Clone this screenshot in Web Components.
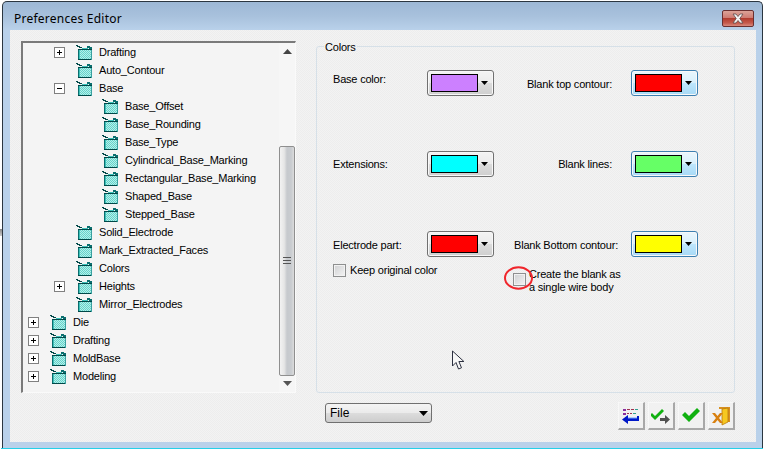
<!DOCTYPE html>
<html><head><meta charset="utf-8"><style>
html,body{margin:0;padding:0;background:#fff;overflow:hidden}
body{width:763px;height:449px;font:12px "Liberation Sans",sans-serif;color:#000}
</style></head><body>
<pref-window heading="Preferences Editor">
  <tree-panel slot="tree">
    <tree-row level="1" exp="+">Drafting</tree-row>
    <tree-row level="1">Auto_Contour</tree-row>
    <tree-row level="1" exp="-">Base</tree-row>
    <tree-row level="2">Base_Offset</tree-row>
    <tree-row level="2">Base_Rounding</tree-row>
    <tree-row level="2">Base_Type</tree-row>
    <tree-row level="2">Cylindrical_Base_Marking</tree-row>
    <tree-row level="2">Rectangular_Base_Marking</tree-row>
    <tree-row level="2">Shaped_Base</tree-row>
    <tree-row level="2">Stepped_Base</tree-row>
    <tree-row level="1">Solid_Electrode</tree-row>
    <tree-row level="1">Mark_Extracted_Faces</tree-row>
    <tree-row level="1">Colors</tree-row>
    <tree-row level="1" exp="+">Heights</tree-row>
    <tree-row level="1">Mirror_Electrodes</tree-row>
    <tree-row level="0" exp="+">Die</tree-row>
    <tree-row level="0" exp="+">Drafting</tree-row>
    <tree-row level="0" exp="+">MoldBase</tree-row>
    <tree-row level="0" exp="+">Modeling</tree-row>
  </tree-panel>
  <colors-group slot="group" label="Colors"></colors-group>
  <combo-box slot="combo">File</combo-box>
  <tool-button slot="tools" kind="list"></tool-button>
  <tool-button slot="tools" kind="apply"></tool-button>
  <tool-button slot="tools" kind="ok"></tool-button>
  <tool-button slot="tools" kind="exit"></tool-button>
</pref-window>
<script>
function def(name, css, html, init){
  customElements.define(name, class extends HTMLElement{
    connectedCallback(){
      if(this.shadowRoot) return;
      const r=this.attachShadow({mode:'open'});
      r.innerHTML='<style>'+css+'</style>'+(typeof html==='function'?html(this):html);
      if(init) init(this,r);
    }
  });
}
const dither='background-color:#f0f0f0;background-image:conic-gradient(#f3f3f3 25%,#ededed 0 50%,#f3f3f3 0 75%,#ededed 0);background-size:2px 2px;';
const uiFont='font:11px "Liberation Sans",sans-serif;letter-spacing:-.2px;';

def('pref-window',`
:host{display:block;position:relative;width:763px;height:449px;box-sizing:border-box;padding:1px 0 0 2px}
.frame{box-sizing:border-box;height:447px;border:1px solid #2b3640;border-width:1px 1px 0 1px;border-radius:5px 5px 0 0;
  background:linear-gradient(#9db8d5 0,#a8c1dc 14px,#b9d1ea 28px,#b9d1ea 100%);display:flex;flex-direction:column}
.bar{height:28px;box-sizing:border-box;flex:none;display:flex;align-items:flex-start;justify-content:space-between;padding:0 8px 0 11px}
.title{font:12px "Noto Sans",sans-serif;color:#000;margin-top:8px;letter-spacing:.02em}
.close{width:32px;height:17px;box-sizing:border-box;border:1px solid #6a3030;border-radius:2px;margin-top:8px;
  background:linear-gradient(#dca398 0,#cf7c72 45%,#b13d2f 50%,#c65a4c 80%,#d88a7e 100%);display:flex;align-items:center;justify-content:center}
.client{margin:0 6px 0 7px;height:412px;box-sizing:border-box;${dither}
  display:grid;grid-template-columns:275px 419px;column-gap:20px;grid-template-rows:352px 28px;row-gap:9px;padding:11px 0 0 11px;position:relative}
.tree{grid-row:1/3;height:352px}
.foot{display:flex;justify-content:space-between;padding-left:9px;grid-column:2;align-items:flex-start}
.foot>div{display:flex;gap:3px}
.pad{height:5px;flex:none}
.edge{height:1px;background:#25d0e8;flex:none;margin:0 -1px}
.ring{position:absolute;left:493px;top:236px;pointer-events:none}
.cursor{position:absolute;left:441px;top:320px;pointer-events:none}
.sliver{position:absolute;left:0;top:229px;width:2px;height:7px;background:linear-gradient(#888,#ccc)}
`,h=>`<div class="sliver"></div><div class="frame">
  <div class="bar"><span class="title">${h.getAttribute('heading')}</span>
    <span class="close"><svg width="18" height="11" viewBox="0 0 18 11"><path d="M4 1h3l2 2.500L11 1h3l-3.200 4.500L14 10h-3L9 7.500 7 10H4l3.200-4.500z" fill="#f4f4f4" stroke="#5d4a4a" stroke-width=".8"/></svg></span></div>
  <div class="client">
    <div class="tree"><slot name="tree"></slot></div>
    <div style="grid-column:2;grid-row:1"><slot name="group"></slot></div>
    <div class="foot"><slot name="combo"></slot><div><slot name="tools"></slot></div></div>
    <svg class="ring" width="31" height="25" viewBox="0 0 31 25"><ellipse cx="15.500" cy="12" rx="13.500" ry="10.700" fill="none" stroke="#f0262c" stroke-width="2"/></svg>
    <svg class="cursor" width="14" height="22" viewBox="0 0 14 22"><path d="M1.500 1v15l3.500-3.500 2.500 6.500 3-1.200-2.600-6.300h5z" fill="#f7f7f7" stroke="#2c3040" stroke-width="1"/></svg>
  </div>
  <div class="pad"></div>
</div><div class="edge"></div>`);

def('tree-panel',`
:host{display:flex;box-sizing:border-box;width:275px;height:352px;border-style:solid;border-width:2px 1px 1px 2px;border-color:#7a7a7a #fafafa #fafafa #7a7a7a;background:#f4f4f4}
.rows{flex:1;min-width:0}
`,`<div class="rows"><slot></slot></div><v-scrollbar></v-scrollbar>`);

def('tree-row',`
:host{display:flex;align-items:center;height:18px;${uiFont}white-space:nowrap}
.exp{width:11px;height:11px;flex:none;margin-right:11px;box-sizing:border-box;border:1px solid #808080;background:#fff;display:flex;align-items:center;justify-content:center}
.blank{visibility:hidden}
svg.box{margin-right:7px;flex:none}
`,h=>{
  const e=h.getAttribute('exp');
  h.style.paddingLeft=(5+26*(+h.getAttribute('level')))+'px';
  const mark=e==='+'?'<path d="M2 4.500h5M4.500 2v5" stroke="#000"/>':e==='-'?'<path d="M2 4.500h5" stroke="#000"/>':'';
  return `<span class="exp ${e?'':'blank'}"><svg width="9" height="9" viewBox="0 0 9 9">${mark}</svg></span>
  <svg class="box" width="16" height="16" viewBox="0 0 16 16" shape-rendering="crispEdges">
    <defs><pattern id="d" width="2" height="2" patternUnits="userSpaceOnUse"><rect width="2" height="2" fill="#b4f0ea"/><rect width="1" height="1" fill="#66d2ca"/><rect x="1" y="1" width="1" height="1" fill="#66d2ca"/></pattern></defs>
    <path d="M4 6h11v9H4z" fill="url(#d)"/>
    <path d="M2 5h2v10H2z" fill="#0a6e6e"/><path d="M3 6h1v9H3z" fill="#3cc0b8"/>
    <path d="M2 15h13v1H2z" fill="#004848"/><path d="M15 5h1v11h-1z" fill="#3aa0a0"/>
    <path d="M2 5h14v1H2z" fill="#004848"/>
    <path d="M0 1h2v1h2v1h2v1h-3V3H1V2H0z" fill="#004848"/>
    <path d="M6 4h6v1H6z" fill="#3cc0b8"/>
    <path d="M11 2h3v1h2v2h-3V4h-2z" fill="#0a6e6e"/>
  </svg><slot></slot>`;
});

def('v-scrollbar',`
:host{display:flex;flex-direction:column;width:16px;flex:none;background:#f6f6f6;margin-right:0}
.b{height:17px;flex:none;display:flex;align-items:center;justify-content:center}
.t{flex:1;min-height:0;padding-top:86px;box-sizing:border-box}
.th{height:230px;box-sizing:border-box;border:1px solid #8f8f8f;border-radius:2px;background:linear-gradient(90deg,#f2f2f2 0,#e6e6e6 30%,#c6c9cd 50%,#c9ccd0 80%,#dcdcdc 100%);display:flex;align-items:center;justify-content:center}
`,`<div class="b"><svg width="9" height="5" viewBox="0 0 9 5"><path d="M4.500 0L9 5H0z" fill="#444"/></svg></div>
<div class="t"><div class="th"><svg width="8" height="8" viewBox="0 0 8 8"><path d="M0 .5h8M0 3.500h8M0 6.500h8" stroke="#555"/></svg></div></div>
<div class="b"><svg width="9" height="5" viewBox="0 0 9 5"><path d="M0 0h9L4.500 5z" fill="#555"/></svg></div>`);

def('colors-group',`
:host{display:block;box-sizing:border-box;height:347px;margin-top:5px;border:1px solid #d6e0e8;border-radius:3px;${uiFont}}
.cap{display:block;width:fit-content;margin:-6px 0 0 7px;padding:0 1px;${dither}line-height:13px}
.g{display:grid;grid-template-columns:94px 67px 20px 104px 13px 67px;grid-template-rows:81px 80px 26px auto;padding:16px 0 0 16px;align-items:start}
.l{height:26px;line-height:26px;white-space:nowrap}
.r{text-align:right;grid-column:4}
.bt{grid-column:6}
.bl{grid-column:2}
.a{grid-column:1/3;margin-top:7px}
.c{grid-column:3/7;margin-top:16px;margin-left:19px}
`,h=>`<span class="cap">${h.getAttribute('label')}</span>
<div class="g">
 <span class="l" style="margin-top:-4px">Base color:</span><color-button class="bl" color="#cc80ff"></color-button>
 <span class="l r" style="padding-right:6px;margin-top:1px">Blank top contour:</span><color-button class="bt" hot color="#ff0000"></color-button>
 <span class="l">Extensions:</span><color-button class="bl" color="#00ffff"></color-button>
 <span class="l r" style="padding-right:6px">Blank lines:</span><color-button class="bt" hot color="#66ff66"></color-button>
 <span class="l" style="margin-top:1px">Electrode part:</span><color-button class="bl" color="#ff0000"></color-button>
 <span class="l r" style="margin-top:1px">Blank Bottom contour:</span><color-button class="bt" hot color="#ffff00"></color-button>
 <check-box class="a">Keep original color</check-box>
 <check-box class="c" multi>Create the blank as<br>a single wire body</check-box>
</div>`);

def('color-button',`
:host{display:flex;box-sizing:border-box;width:67px;height:26px;border:1px solid #707070;border-radius:3px;padding:3px 3px 3px 3px;
  background:linear-gradient(#f4f4f4 0,#ececec 48%,#dcdcdc 52%,#cfcfcf 100%);box-shadow:inset 0 0 0 1px #f8f8f8}
:host([hot]){border-color:#3c7fb1;background:linear-gradient(#eaf6fd 0,#d9f0fc 48%,#bee6fd 52%,#a7d9f5 100%)}
.s{width:47px;height:18px;box-sizing:border-box;border:1px solid #000;flex:none}
.a{flex:1;display:flex;align-items:center;justify-content:center;padding-bottom:1px}
`,h=>`<span class="s" style="background:${h.getAttribute('color')}"></span><span class="a"><svg width="7" height="4" viewBox="0 0 7 4"><path d="M0 0h7L3.500 4z" fill="#000"/></svg></span>`);

def('check-box',`
:host{display:flex;align-items:flex-start;gap:4px;white-space:nowrap;line-height:13px}
.b{width:13px;height:13px;box-sizing:border-box;border:1px solid #8e8f8f;background:linear-gradient(135deg,#cfd0d2,#f4f4f4);box-shadow:inset 0 0 0 1px #f2f2f2;flex:none}
:host([multi]){gap:3px}
:host([multi]) .t{margin-top:-5px}
`,`<span class="b"></span><span class="t"><slot></slot></span>`);

def('combo-box',`
:host{display:flex;align-items:center;justify-content:space-between;box-sizing:border-box;width:107px;height:20px;margin-top:1px;padding:0 3px 0 4px;border:1px solid #707070;border-radius:3px;
 background:linear-gradient(#f4f4f4,#ebebeb 48%,#dcdcdc 52%,#cdcdcd);font:12px "Liberation Sans",sans-serif}
`,`<slot></slot><svg width="9" height="5" viewBox="0 0 9 5"><path d="M0 0h9L4.500 5z" fill="#000"/></svg>`);

const icons={
 list:`<path d="M2 3h3v2H2zM2 7h3v2H2z" fill="#8a2ea0"/><path d="M6 3h3v1H6zM10 3h3v1h-3zM6 7h2v1H6zM9 7h2v1H9z" fill="#a03050"/><path d="M12 7h3v1h-3zM14 3h3v1h-3z" fill="#30a090"/>
   <path d="M18 10v5H7v3l-6-4.500 6-4.500v3h9v-2z" fill="#0018c8"/><path d="M7 12h9" stroke="#6ea0ff" stroke-width="1"/>`,
 apply:`<path d="M1 7l3 3 7-7 2 2-9 9-5-5z" fill="#10b010"/><path d="M9 12h5V9l5 4.500L14 18v-3H9z" fill="#505050"/>`,
 ok:`<path d="M1 9l3-3 4 4 8-8 3 3L8 16z" fill="#10b010"/>`,
 exit:`<path d="M8 1h11v15h-2V3H8z" fill="#d89020"/><path d="M11 3l6-1v14l-6 3z" fill="#f6c820" stroke="#b87810" stroke-width=".8"/><path d="M1 7h3l2.500 3L9 7h3l-4 5 4 5H9l-2.500-3L4 17H1l4-5z" fill="#d88010"/>`
};
def('tool-button',`
:host{display:flex;align-items:center;justify-content:center;box-sizing:border-box;width:27px;height:28px;background:#f1f1f1;border-style:solid;border-width:1px 2px 2px 1px;border-color:#f8f8f8 #a8a8a8 #a8a8a8 #f8f8f8}
`,h=>`<svg width="20" height="20" viewBox="0 0 20 20">${icons[h.getAttribute('kind')]}</svg>`);
</script>
</body></html>
